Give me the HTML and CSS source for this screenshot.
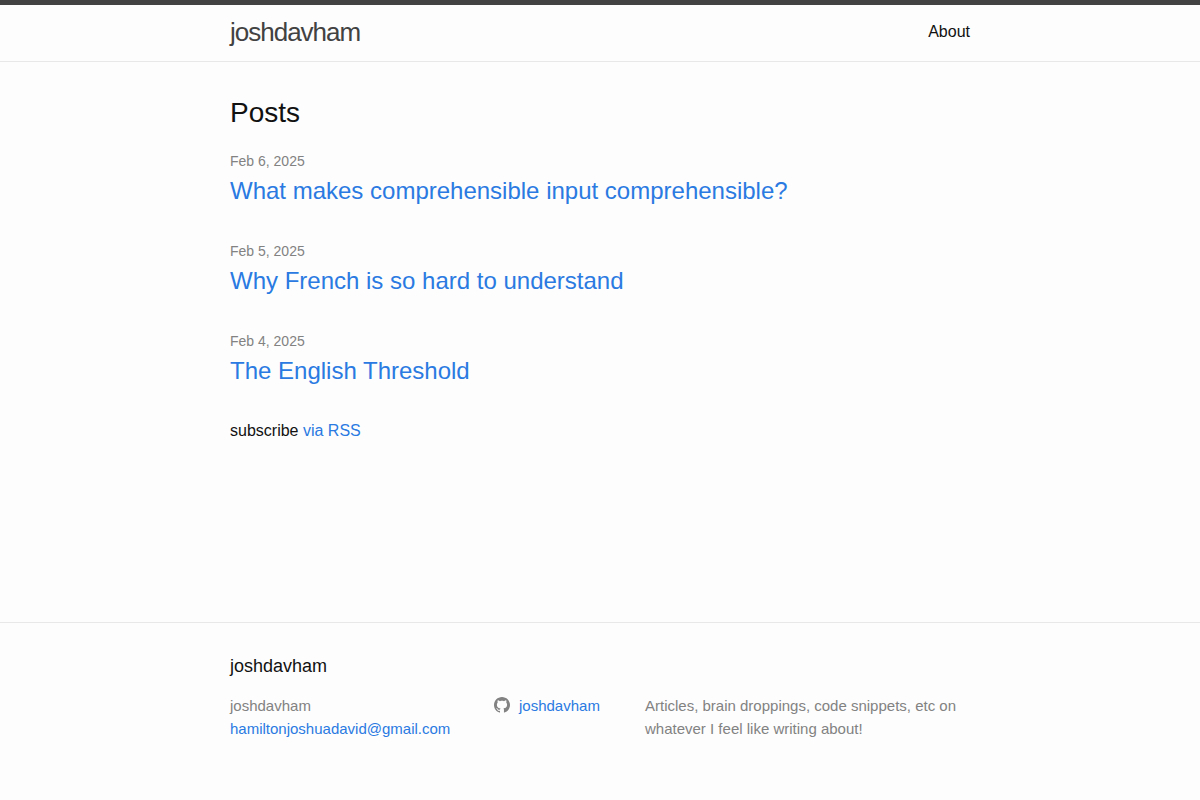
FILE: index.html
```html
<!DOCTYPE html>
<html lang="en">
<head>
<meta charset="utf-8">
<meta name="viewport" content="width=device-width, initial-scale=1">
<title>joshdavham</title>
<link rel="stylesheet" href="styles.css">
</head>
<body>
<header class="site-header">
  <div class="wrapper header-row">
    <a class="site-title" href="#">joshdavham</a>
    <nav class="site-nav"><a class="page-link" href="#about">About</a></nav>
  </div>
</header>
<main class="page-content">
  <div class="wrapper">
    <h2 class="post-list-heading">Posts</h2>
    <ul class="post-list">
      <li><span class="post-meta">Feb 6, 2025</span><h3><a class="post-link" href="#p3">What makes comprehensible input comprehensible?</a></h3></li>
      <li><span class="post-meta">Feb 5, 2025</span><h3><a class="post-link" href="#p2">Why French is so hard to understand</a></h3></li>
      <li><span class="post-meta">Feb 4, 2025</span><h3><a class="post-link" href="#p1">The English Threshold</a></h3></li>
    </ul>
    <p class="rss-subscribe">subscribe <a href="#rss">via RSS</a></p>
  </div>
</main>
<footer class="site-footer">
  <div class="wrapper">
    <h2 class="footer-heading">joshdavham</h2>
    <div class="footer-cols">
      <ul class="contact-list">
        <li>joshdavham</li>
        <li><a href="mailto:hamiltonjoshuadavid@gmail.com">hamiltonjoshuadavid@gmail.com</a></li>
      </ul>
      <ul class="social-list">
        <li><a class="social-link" href="#github"><svg class="svg-icon" viewBox="0 0 16 16" aria-hidden="true"><path fill-rule="evenodd" d="M8 0C3.58 0 0 3.582 0 8c0 3.535 2.292 6.533 5.47 7.59.4.075.547-.172.547-.385 0-.19-.007-.693-.01-1.36-2.226.483-2.695-1.073-2.695-1.073-.364-.924-.89-1.17-.89-1.17-.725-.496.056-.486.056-.486.803.056 1.225.824 1.225.824.714 1.223 1.873.87 2.33.665.072-.517.278-.87.507-1.07-1.777-.2-3.644-.888-3.644-3.953 0-.873.31-1.587.823-2.147-.09-.202-.36-1.015.07-2.117 0 0 .67-.215 2.2.82.64-.178 1.32-.266 2-.27.68.004 1.36.092 2 .27 1.52-1.035 2.19-.82 2.19-.82.43 1.102.16 1.915.08 2.117.51.56.82 1.274.82 2.147 0 3.073-1.87 3.75-3.65 3.947.28.24.54.73.54 1.48 0 1.07-.01 1.93-.01 2.19 0 .21.14.46.55.38C13.71 14.53 16 11.53 16 8c0-4.418-3.582-8-8-8"/></svg><span>joshdavham</span></a></li>
      </ul>
      <p class="description">Articles, brain droppings, code snippets, etc on whatever I feel like writing about!</p>
    </div>
  </div>
</footer>
</body>
</html>
```
FILE: styles.css
```css
* { box-sizing: border-box; }
body, h2, h3, p, ul { margin: 0; padding: 0; }
ul { list-style: none; }
h2, h3 { font-weight: 400; }
body {
  display: flex;
  flex-direction: column;
  min-height: 100vh;
  background: #fdfdfd;
  color: #111;
  font: 16px/24px "Liberation Sans", Arial, sans-serif;
}
a { color: #2a7ae2; text-decoration: none; }
a:hover { color: #111; text-decoration: underline; }
.wrapper { max-width: 800px; margin: 0 auto; padding: 0 30px; }
.site-header { border-top: 5px solid #424242; border-bottom: 1px solid #e8e8e8; }
.header-row { display: flex; justify-content: space-between; }
.site-title { color: #424242; font-size: 26px; line-height: 54px; letter-spacing: -1px; height: 56px; }
.page-link { color: #111; line-height: 54px; }
.page-content { flex: 1 0 auto; padding: 30px 0; }
.page-content > .wrapper, .site-footer > .wrapper { width: 100%; }
.post-list-heading { font-size: 28px; line-height: 42px; margin-bottom: 15px; }
.post-list { margin-bottom: 30px; }
.post-list li { margin-bottom: 30px; }
.post-meta { display: block; color: #828282; font-size: 14px; line-height: 24px; }
.post-list h3 { font-size: 24px; line-height: 36px; }
.site-footer { border-top: 1px solid #e8e8e8; padding: 30px 0; }
.footer-heading { font-size: 18px; line-height: 27px; margin-bottom: 14px; }
.footer-cols { display: grid; grid-template-columns: 264px 151px 1fr; color: #828282; font-size: 15px; line-height: 23px; padding-bottom: 30px; }
.svg-icon { width: 16px; height: 16px; margin-right: 9px; vertical-align: text-top; fill: #828282; }
@media (max-width: 700px) {
  .footer-cols { grid-template-columns: 1fr; gap: 15px; }
}
```
